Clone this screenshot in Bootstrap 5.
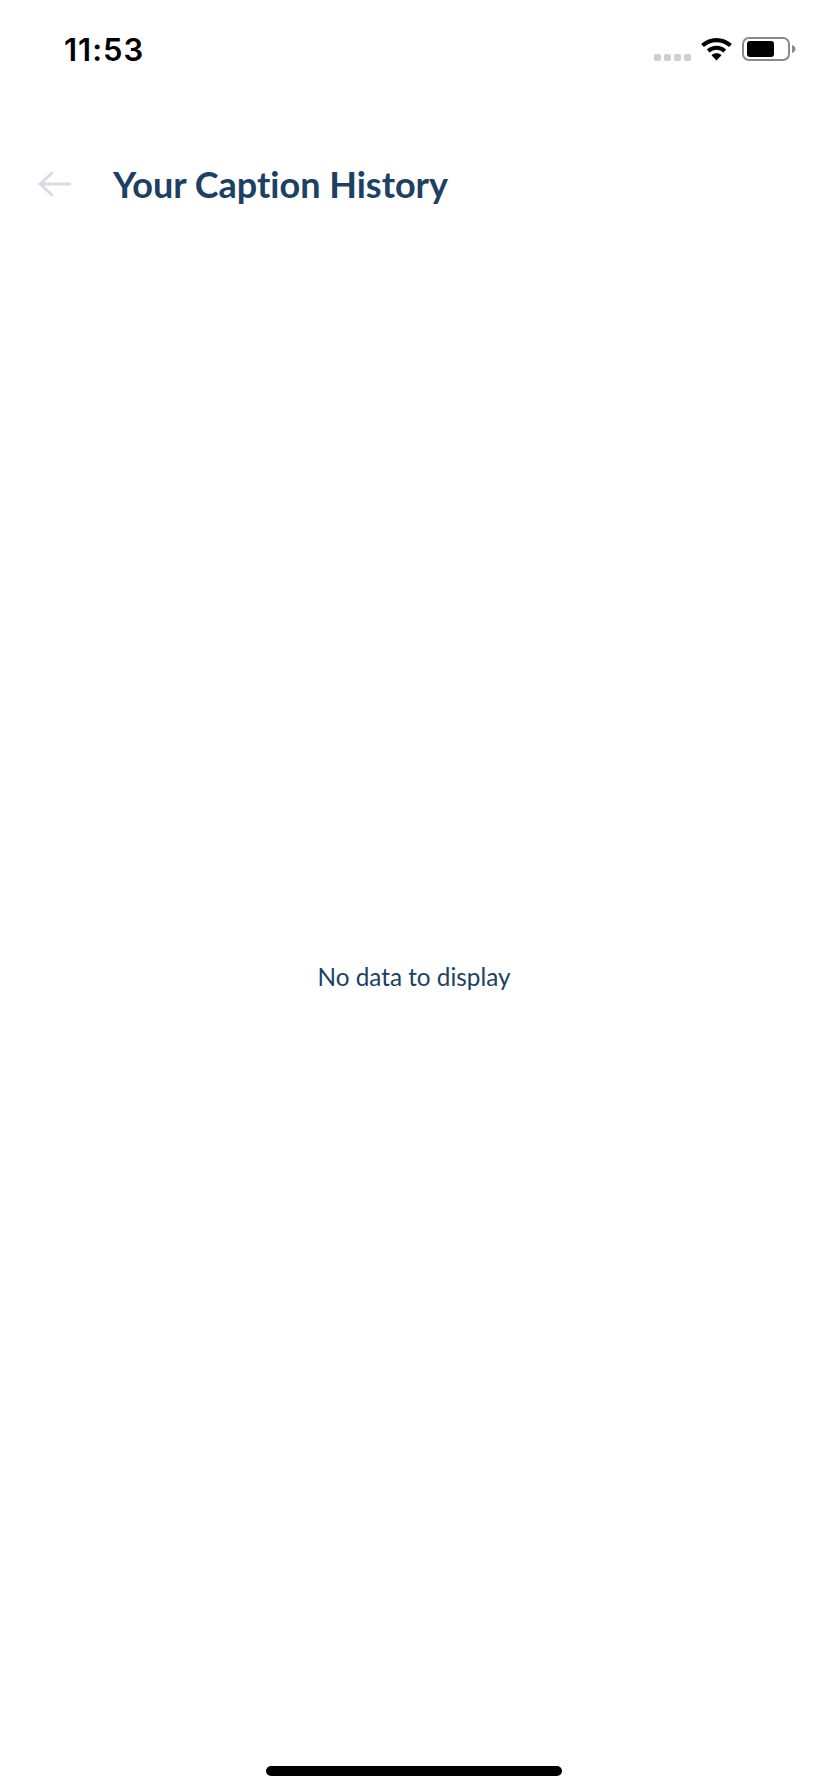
<!DOCTYPE html>
<html lang="en">
<head>
<meta charset="utf-8">
<title>Your Caption History</title>
<link href="https://cdn.jsdelivr.net/npm/bootstrap@5.3.0/dist/css/bootstrap.min.css" rel="stylesheet">
<style>
html, body { height: 100%; }
body { background: #fff; font-family: "Lato", "Liberation Sans", sans-serif; font-variant-ligatures: none; }
.phone-screen { width: 828px; height: 1792px; }
.status-row { height: 140px; padding: 32px 32px 0 64px; }
.clock-text { font-family: "Inter", "Liberation Sans", sans-serif; font-weight: 600; font-size: 31px; line-height: 36px; color: #000; letter-spacing: 1px; }
.signal-dots { gap: 3px; margin-top: 22px; margin-right: 10px; }
.signal-dots span { width: 7px; height: 7px; border-radius: 2px; background: #cfcfcf; display: block; }
.status-svg { display: block; margin-top: 5px; }
.wifi-svg { margin-right: 10px; }
.title-row { height: 88px; padding-left: 38px; }
.back-arrow { width: 33px; height: 26px; margin-right: 42px; display: block; }
.title-text { font-size: 36px; line-height: 44px; font-weight: 700; color: #1c4163; margin: 0; }
.empty-text { font-size: 24.3px; line-height: 30px; color: #1c4163; margin: 0; }
.empty-area { padding-bottom: 26px; }
.home-zone { height: 40px; padding-top: 14px; }
.home-bar { width: 296px; height: 10px; border-radius: 5px; background: #000; }
</style>
</head>
<body>
<div class="phone-screen d-flex flex-column">
  <div class="status-row d-flex justify-content-between align-items-start">
    <span class="clock-text">11:53</span>
    <div class="d-flex align-items-start">
      <div class="signal-dots d-flex"><span></span><span></span><span></span><span></span></div>
      <svg class="status-svg wifi-svg" width="31" height="24" viewBox="0 0 31 24" fill="none">
        <path d="M1.5 8.5C9.5 1.2 21.5 1.2 29.5 8.5" stroke="#000" stroke-width="4.2"/>
        <path d="M7.2 14C12 9.8 19 9.8 23.8 14" stroke="#000" stroke-width="4"/>
        <path d="M10.5 18.2L15.5 23.5L20.5 18.2C17.5 15.6 13.5 15.6 10.5 18.2Z" fill="#000"/>
      </svg>
      <svg class="status-svg" width="54" height="24" viewBox="0 0 54 24">
        <rect x="1" y="1" width="46" height="22" rx="6" fill="none" stroke="#8a8a8a" stroke-width="2"/>
        <rect x="5" y="4" width="27" height="16" rx="3" fill="#000"/>
        <path d="M50 8C52.5 9 53.5 10.5 53.5 12C53.5 13.5 52.5 15 50 16Z" fill="#8a8a8a"/>
      </svg>
    </div>
  </div>
  <div class="title-row d-flex align-items-center">
    <svg class="back-arrow" viewBox="0 0 33 26" fill="none" stroke="#d8dbe1" stroke-width="3" stroke-linecap="round" stroke-linejoin="round">
      <path d="M32 13H2"/>
      <path d="M14 2L2 13L14 24"/>
    </svg>
    <h1 class="title-text">Your Caption History</h1>
  </div>
  <main class="empty-area flex-grow-1 d-flex align-items-center justify-content-center">
    <p class="empty-text">No data to display</p>
  </main>
  <div class="home-zone d-flex justify-content-center">
    <div class="home-bar"></div>
  </div>
</div>
<script src="https://cdn.jsdelivr.net/npm/bootstrap@5.3.0/dist/js/bootstrap.bundle.min.js"></script>
</body>
</html>
